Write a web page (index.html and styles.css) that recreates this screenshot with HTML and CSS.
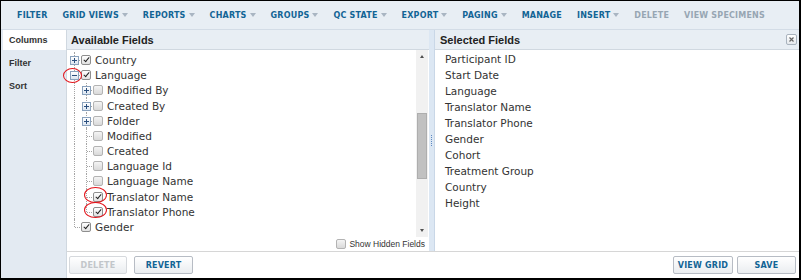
FILE: index.html
```html
<!DOCTYPE html>
<html lang="en">
<head>
    <meta charset="UTF-8">
    <title>Customize Grid</title>
    <link rel="stylesheet" href="styles.css">
</head>
<body>
<div class="frame">
    <div class="toolbar">
        <span class="tb">FILTER</span>
        <span class="tb menu">GRID VIEWS</span>
        <span class="tb menu">REPORTS</span>
        <span class="tb menu">CHARTS</span>
        <span class="tb menu">GROUPS</span>
        <span class="tb menu">QC STATE</span>
        <span class="tb menu">EXPORT</span>
        <span class="tb menu">PAGING</span>
        <span class="tb">MANAGE</span>
        <span class="tb menu">INSERT</span>
        <span class="tb off">DELETE</span>
        <span class="tb off">VIEW SPECIMENS</span>
    </div>
    <div class="main">
        <div class="sidebar">
            <div class="tab active">Columns</div>
            <div class="tab">Filter</div>
            <div class="tab">Sort</div>
        </div>
        <div class="content">
            <div class="panels">
                <div class="avail">
                    <div class="phead">Available Fields</div>
                    <div class="abody">
                        <div class="tree">
                            <div class="row">
                                <span class="ln"><span class="exp"></span></span>
                                <span class="cb on"></span><span class="lbl">Country</span>
                            </div>
                            <div class="row">
                                <span class="ln"><span class="exp open"></span></span>
                                <span class="cb on"></span><span class="lbl">Language</span>
                                <span class="mark m-exp"></span>
                            </div>
                            <div class="row">
                                <span class="ln pass"></span><span class="ln"><span class="exp"></span></span>
                                <span class="cb"></span><span class="lbl">Modified By</span>
                            </div>
                            <div class="row">
                                <span class="ln pass"></span><span class="ln"><span class="exp"></span></span>
                                <span class="cb"></span><span class="lbl">Created By</span>
                            </div>
                            <div class="row">
                                <span class="ln pass"></span><span class="ln"><span class="exp"></span></span>
                                <span class="cb"></span><span class="lbl">Folder</span>
                            </div>
                            <div class="row">
                                <span class="ln pass"></span><span class="ln"></span>
                                <span class="cb"></span><span class="lbl">Modified</span>
                            </div>
                            <div class="row">
                                <span class="ln pass"></span><span class="ln"></span>
                                <span class="cb"></span><span class="lbl">Created</span>
                            </div>
                            <div class="row">
                                <span class="ln pass"></span><span class="ln"></span>
                                <span class="cb"></span><span class="lbl">Language Id</span>
                            </div>
                            <div class="row">
                                <span class="ln pass"></span><span class="ln"></span>
                                <span class="cb"></span><span class="lbl">Language Name</span>
                            </div>
                            <div class="row">
                                <span class="ln pass"></span><span class="ln"></span>
                                <span class="cb on"></span><span class="lbl">Translator Name</span>
                                <span class="mark m-cb"></span>
                            </div>
                            <div class="row">
                                <span class="ln pass"></span><span class="ln last"></span>
                                <span class="cb on"></span><span class="lbl">Translator Phone</span>
                                <span class="mark m-cb"></span>
                            </div>
                            <div class="row">
                                <span class="ln last"></span>
                                <span class="cb on"></span><span class="lbl">Gender</span>
                            </div>
                        </div>
                        <div class="vscroll">
                            <div class="sb-btn"><span class="arr up"></span></div>
                            <div class="sb-track"><div class="thumb"></div></div>
                            <div class="sb-btn"><span class="arr down"></span></div>
                        </div>
                    </div>
                    <div class="hidden-row">
                        <span class="cb"></span><span>Show Hidden Fields</span>
                    </div>
                </div>
                <div class="splitter"><span class="grip"></span></div>
                <div class="selected">
                    <div class="phead">
                        Selected Fields
                        <span class="close">
                            <svg width="5" height="5" viewBox="0 0 5 5"><path d="M0.5 0.5L4.5 4.5M4.5 0.5L0.5 4.5" stroke="#666" stroke-width="1.2"/></svg>
                        </span>
                    </div>
                    <ul class="sel-list">
                        <li>Participant ID</li>
                        <li>Start Date</li>
                        <li>Language</li>
                        <li>Translator Name</li>
                        <li>Translator Phone</li>
                        <li>Gender</li>
                        <li>Cohort</li>
                        <li>Treatment Group</li>
                        <li>Country</li>
                        <li>Height</li>
                    </ul>
                </div>
            </div>
            <div class="buttons">
                <span class="btn disabled b-delete">DELETE</span>
                <span class="btn b-revert">REVERT</span>
                <span class="btn b-grid">VIEW GRID</span>
                <span class="btn b-save">SAVE</span>
            </div>
        </div>
    </div>
</div>
</body>
</html>
```

FILE: styles.css
```css
body {
    margin: 0;
    font-family: "DejaVu Sans", Verdana, sans-serif;
    background: #fff;
}
.frame {
    width: 801px;
    height: 280px;
    box-sizing: border-box;
    border: 1px solid #000;
    border-right-width: 2px;
    border-bottom-width: 2px;
    display: flex;
    flex-direction: column;
}

/* toolbar */
.toolbar {
    flex: none;
    border-bottom: 1px solid #d3dce6;
    background: #e8eef4;
    display: flex;
    align-items: center;
    gap: 15px;
    padding: 1px 0 0 16px;
    box-sizing: border-box;
    height: 29px;
    font-family: "DejaVu Sans", sans-serif;
    font-weight: bold;
    font-size: 8px;
    letter-spacing: 0.2px;
    color: #126495;
    white-space: nowrap;
}
.tb.off {
    color: #97a6b3;
}
.tb.menu::after {
    content: '';
    display: inline-block;
    margin-left: 3px;
    vertical-align: 1px;
    border-left: 3px solid transparent;
    border-right: 3px solid transparent;
    border-top: 4px solid #a9b5c2;
}

.main {
    flex: 1;
    display: flex;
    min-height: 0;
}
.sidebar {
    width: 65px;
    flex: none;
    background: #e3eaf2;
}
.tab {
    height: 20px;
    line-height: 20px;
    margin: 0 0 3px 2px;
    padding-left: 6px;
    font-family: "Liberation Sans", Arial, sans-serif;
    font-weight: bold;
    font-size: 9px;
    color: #333;
}
.tab.active {
    background: #fff;
}
.content {
    flex: 1;
    display: flex;
    flex-direction: column;
    border-left: 1px solid #d0d8e0;
    min-width: 0;
}
.panels {
    flex: 1;
    display: flex;
    min-height: 0;
}
.phead {
    height: 20px;
    flex: none;
    box-sizing: border-box;
    border-bottom: 1px solid #d0d8e0;
    background: #e8eef4;
    display: flex;
    align-items: center;
    padding-left: 4px;
    font-family: "Liberation Sans", Arial, sans-serif;
    font-weight: bold;
    font-size: 11px;
    color: #222;
}

/* available fields */
.avail {
    width: 362px;
    flex: none;
    display: flex;
    flex-direction: column;
}
.abody {
    flex: 1;
    display: flex;
    min-height: 0;
}
.tree {
    flex: 1;
    padding: 2.4px 0 0 1px;
}
.row {
    height: 15.2px;
    display: flex;
    align-items: center;
    position: relative;
    font-size: 10.5px;
    color: #333;
    white-space: nowrap;
}
.ln {
    width: 12px;
    flex: none;
    align-self: stretch;
    position: relative;
}
.ln::before {
    content: '';
    position: absolute;
    left: 6px;
    top: 0;
    bottom: 0;
    border-left: 1px dotted #a5a5a5;
}
.ln.last::before {
    bottom: 50%;
}
.ln:not(.pass)::after {
    content: '';
    position: absolute;
    left: 7px;
    right: 0;
    top: 50%;
    border-top: 1px dotted #a5a5a5;
}
.exp {
    position: absolute;
    z-index: 1;
    left: 2px;
    top: calc(50% - 4px);
    width: 7px;
    height: 7px;
    border: 1px solid #8aa2bd;
    background: linear-gradient(#ffffff, #dbe5f0);
}
.exp::before {
    content: '';
    position: absolute;
    left: 1px;
    top: 3px;
    width: 5px;
    height: 1px;
    background: #2b4f7e;
}
.exp::after {
    content: '';
    position: absolute;
    left: 3px;
    top: 1px;
    width: 1px;
    height: 5px;
    background: #2b4f7e;
}
.exp.open::after {
    display: none;
}
.cb {
    width: 10px;
    height: 10px;
    flex: none;
    box-sizing: border-box;
    border: 1px solid #b3b3b3;
    border-radius: 2px;
    background: linear-gradient(#f4f4f4, #d9d9d9);
    position: relative;
}
.row .cb {
    margin-left: 1px;
}
.cb.on {
    border-color: #8e8e8e;
    background: linear-gradient(#ffffff, #e2e2e2);
}
.cb.on::after {
    content: '';
    position: absolute;
    left: 2.5px;
    top: 0;
    width: 2px;
    height: 5px;
    border-right: 1.6px solid #222;
    border-bottom: 1.6px solid #222;
    transform: rotate(40deg);
}
.lbl {
    margin-left: 4px;
}
.mark {
    position: absolute;
    box-sizing: border-box;
    border: 1.5px solid #e3141b;
    border-radius: 50%;
}
.m-exp {
    left: -5px;
    top: 0;
    width: 19px;
    height: 15px;
}
.m-cb {
    left: 16px;
    top: -2px;
    width: 23px;
    height: 16px;
}
.vscroll {
    width: 12px;
    flex: none;
    margin-right: 1px;
    background: #f1f1f1;
    display: flex;
    flex-direction: column;
}
.sb-btn {
    height: 13px;
    flex: none;
    display: flex;
    align-items: center;
    justify-content: center;
}
.arr {
    border-left: 2.5px solid transparent;
    border-right: 2.5px solid transparent;
}
.arr.up {
    border-bottom: 3px solid #505050;
}
.arr.down {
    border-top: 3px solid #505050;
}
.sb-track {
    flex: 1;
}
.thumb {
    margin: 50px 0 0 1px;
    width: 10px;
    height: 66px;
    box-sizing: border-box;
    background: #c1c1c1;
    border: 1px solid #aeaeae;
}
.hidden-row {
    height: 14px;
    flex: none;
    display: flex;
    align-items: center;
    justify-content: flex-end;
    gap: 3px;
    padding-right: 4px;
    font-family: "Liberation Sans", Arial, sans-serif;
    font-size: 8.5px;
    color: #333;
}

.splitter {
    width: 6px;
    flex: none;
    background: #dce7f3;
    border-right: 1px solid #c9d7e7;
    box-sizing: border-box;
    display: flex;
    align-items: center;
    justify-content: center;
}
.grip {
    height: 11px;
    border-left: 1px dotted #5d88c2;
}

/* selected fields */
.selected {
    flex: 1;
    display: flex;
    flex-direction: column;
}
.selected .phead {
    padding-left: 5px;
}
.close {
    margin-left: auto;
    margin-right: 2px;
    width: 11px;
    height: 11px;
    box-sizing: border-box;
    border: 1px solid #a9b3be;
    border-radius: 2px;
    background: linear-gradient(#ffffff, #e4e8ec);
    display: flex;
    align-items: center;
    justify-content: center;
}
.sel-list {
    list-style: none;
    margin: 0;
    padding: 1px 0 0 10px;
    font-size: 10.5px;
    line-height: 16px;
    color: #333;
}

/* button bar */
.buttons {
    height: 27px;
    flex: none;
    box-sizing: border-box;
    border-top: 1px solid #d6d6d6;
    display: flex;
    align-items: center;
    padding: 0 3px 0 2px;
}
.btn {
    height: 18px;
    box-sizing: border-box;
    border: 1px solid #b7bcc4;
    border-radius: 2px;
    background: linear-gradient(#ffffff, #eaedf0);
    display: flex;
    align-items: center;
    justify-content: center;
    font-weight: bold;
    font-size: 8px;
    letter-spacing: 0.2px;
    color: #126495;
}
.btn.disabled {
    color: #c2c6ca;
    border-color: #d6d9dd;
}
.b-delete { width: 58px; }
.b-revert { width: 59px; margin-left: 7px; }
.b-grid { width: 60px; margin-left: auto; }
.b-save { width: 59px; margin-left: 4px; }
```
